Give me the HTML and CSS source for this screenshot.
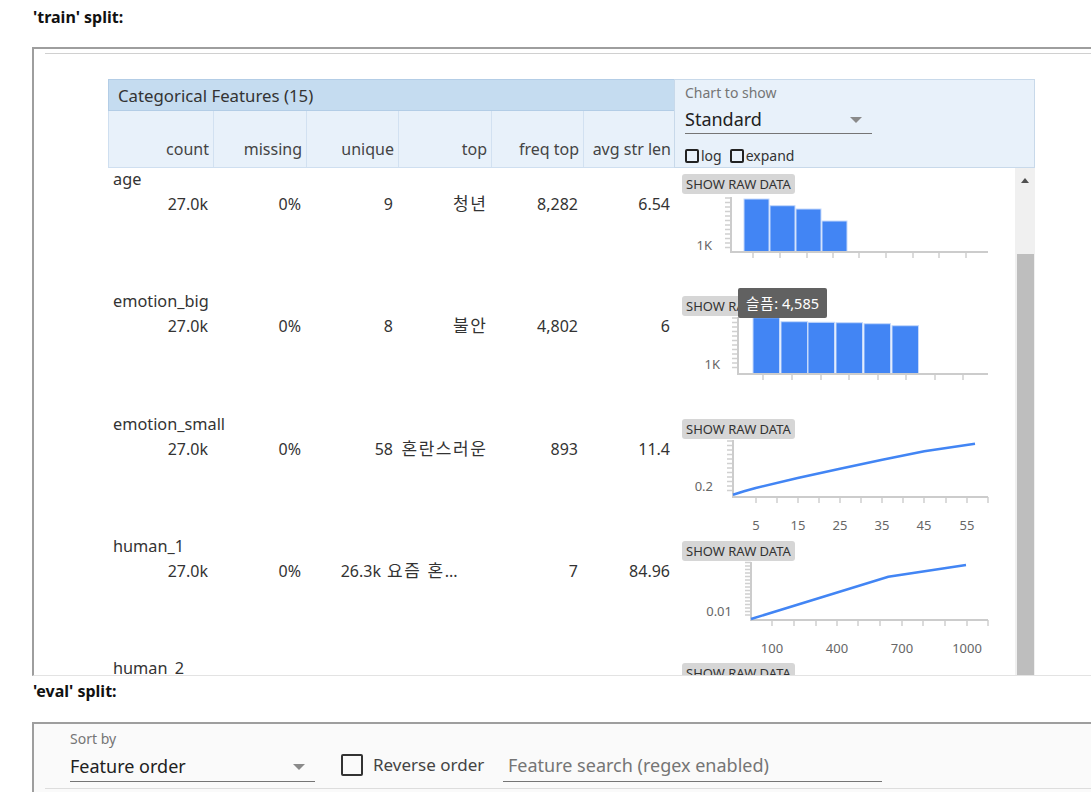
FILE: index.html
```html
<!DOCTYPE html>
<html>
<head>
<meta charset="utf-8">
<link rel="stylesheet" href="styles.css">
</head>
<body>
<div class="split-title">'train' split:</div>
<div class="frame train">
  <div class="rule"></div>
  <div class="overview">
    <div class="table-head">
      <div class="head-stats">
        <div class="head-title">Categorical Features (15)</div>
        <div class="cols head-cols">
          <div class="hc">count</div>
          <div class="hc">missing</div>
          <div class="hc">unique</div>
          <div class="hc">top</div>
          <div class="hc">freq top</div>
          <div class="hc">avg str len</div>
        </div>
      </div>
      <div class="head-chart">
        <div class="ctl-label">Chart to show</div>
        <div class="select small-select"><span>Standard</span><span class="arrow"></span></div>
        <div class="checks">
          <span class="cb-small"></span><span class="cb-text">log</span>
          <span class="cb-small"></span><span class="cb-text">expand</span>
        </div>
      </div>
    </div>
    <div class="table-body">
      <div class="rows">
        <div class="row">
          <div class="stats">
            <div class="name">age</div>
            <div class="cols vals"><div>27.0k</div><div>0%</div><div>9</div><div><span class="ko">청년</span></div><div>8,282</div><div>6.54</div></div>
          </div>
          <div class="chart">
            <div class="raw-btn">SHOW RAW DATA</div>
            <svg class="plot" width="341" height="96" viewBox="0 0 341 96">
              <path class="tick" d="M51 4H57M51 8.5H57M51 13H57M51 17.5H57M51 22H57M51 26.5H57M51 31H57M51 35.5H57M51 40H57M51 44.5H57M51 49H57M51 53.5H57"/>
              <path class="tick" d="M79 58V64M106 58V64M133 58V64M159 58V64M185 58V64M212 58V64M239 58V64M265 58V64M292 58V64"/>
              <rect class="bar" x="70" y="5" width="25" height="53"/>
              <rect class="bar" x="96" y="11.7" width="25" height="46.3"/>
              <rect class="bar" x="122" y="15" width="25" height="43"/>
              <rect class="bar" x="148" y="27" width="25" height="31"/>
              <path class="axis" d="M57 3V58H314"/>
              <text class="lbl" x="38" y="55.5" text-anchor="end">1K</text>
            </svg>
          </div>
        </div>
        <div class="row">
          <div class="stats">
            <div class="name">emotion_big</div>
            <div class="cols vals"><div>27.0k</div><div>0%</div><div>8</div><div><span class="ko">불안</span></div><div>4,802</div><div>6</div></div>
          </div>
          <div class="chart">
            <div class="raw-btn">SHOW RAW DATA</div>
            <svg class="plot" width="341" height="96" viewBox="0 0 341 96">
              <path class="tick" d="M58 2H64M58 6.5H64M58 11H64M58 15.5H64M58 20H64M58 24.5H64M58 29H64M58 33.5H64M58 38H64M58 42.5H64M58 47H64M58 51.5H64"/>
              <path class="tick" d="M89 58V64M118 58V64M147 58V64M175 58V64M204 58V64M232 58V64M261 58V64M289 58V64"/>
              <rect class="bar" x="79" y="1.7" width="26.5" height="56.3"/>
              <rect class="bar" x="107" y="5.7" width="26.5" height="52.3"/>
              <rect class="bar" x="134" y="6.3" width="26.5" height="51.7"/>
              <rect class="bar" x="162" y="6.7" width="26.5" height="51.3"/>
              <rect class="bar" x="190" y="7.7" width="26.5" height="50.3"/>
              <rect class="bar" x="218" y="9.7" width="26.5" height="48.3"/>
              <path class="axis" d="M64 1V58H314"/>
              <text class="lbl" x="46" y="53" text-anchor="end">1K</text>
            </svg>
            <div class="tooltip"><span class="ko-tip">슬픔</span>: 4,585</div>
          </div>
        </div>
        <div class="row">
          <div class="stats">
            <div class="name">emotion_small</div>
            <div class="cols vals"><div>27.0k</div><div>0%</div><div>58</div><div><span class="ko">혼란스러운</span></div><div>893</div><div>11.4</div></div>
          </div>
          <div class="chart">
            <div class="raw-btn">SHOW RAW DATA</div>
            <svg class="plot" width="341" height="96" viewBox="0 0 341 96">
              <path class="tick" d="M53 2H59M53 6.5H59M53 11H59M53 15.5H59M53 20H59M53 24.5H59M53 29H59M53 33.5H59M53 38H59M53 42.5H59M53 47H59M53 51.5H59"/>
              <path class="tick" d="M82 58V64M103 58V64M124 58V64M145 58V64M166 58V64M187 58V64M208 58V64M229 58V64M250 58V64M272 58V64M293 58V64M314 58V64"/>
              <path class="axis" d="M59 1V58H314"/>
              <path class="line" d="M59 55.7L70 52.3L81.7 49L123.7 39L166 29.7L208.3 20.7L250.3 12.3L301 4.7"/>
              <text class="lbl" x="39" y="52" text-anchor="end">0.2</text>
              <text class="lbl" x="82" y="91" text-anchor="middle">5</text>
              <text class="lbl" x="124" y="91" text-anchor="middle">15</text>
              <text class="lbl" x="166" y="91" text-anchor="middle">25</text>
              <text class="lbl" x="208" y="91" text-anchor="middle">35</text>
              <text class="lbl" x="250" y="91" text-anchor="middle">45</text>
              <text class="lbl" x="293" y="91" text-anchor="middle">55</text>
            </svg>
          </div>
        </div>
        <div class="row">
          <div class="stats">
            <div class="name">human_1</div>
            <div class="cols vals vals-wide"><div>27.0k</div><div>0%</div><div>26.3k</div><div class="clip"><span class="ko">요즘 혼</span>...</div><div>7</div><div>84.96</div></div>
          </div>
          <div class="chart">
            <div class="raw-btn">SHOW RAW DATA</div>
            <svg class="plot" width="341" height="96" viewBox="0 0 341 96">
              <path class="tick" d="M71 1.5H77M71 5H77M71 8.5H77M71 12H77M71 15.5H77M71 19H77M71 22.5H77M71 26H77M71 29.5H77M71 33H77M71 36.5H77M71 40H77M71 43.5H77M71 47H77M71 50.5H77M71 54H77"/>
              <path class="tick" d="M98 59V65M120 59V65M142 59V65M163 59V65M184 59V65M206 59V65M228 59V65M249 59V65M271 59V65M293 59V65M314 59V65"/>
              <path class="axis" d="M77 1V59H314"/>
              <path class="line" d="M77 58L214.3 15.7L292 4"/>
              <text class="lbl" x="58" y="54.5" text-anchor="end">0.01</text>
              <text class="lbl" x="98" y="92" text-anchor="middle">100</text>
              <text class="lbl" x="163" y="92" text-anchor="middle">400</text>
              <text class="lbl" x="228" y="92" text-anchor="middle">700</text>
              <text class="lbl" x="293" y="92" text-anchor="middle">1000</text>
            </svg>
          </div>
        </div>
        <div class="row">
          <div class="stats">
            <div class="name">human_2</div>
          </div>
          <div class="chart">
            <div class="raw-btn">SHOW RAW DATA</div>
          </div>
        </div>
      </div>
      <div class="scrollbar">
        <div class="sb-arrow"></div>
        <div class="sb-thumb"></div>
      </div>
    </div>
  </div>
</div>
<div class="split-title eval-title">'eval' split:</div>
<div class="frame eval">
  <div class="controls">
    <div class="sort">
      <div class="ctl-label">Sort by</div>
      <div class="select big-select"><span>Feature order</span><span class="arrow"></span></div>
    </div>
    <div class="reverse">
      <span class="cb-big"></span><span>Reverse order</span>
    </div>
    <input class="search" type="text" placeholder="Feature search (regex enabled)">
  </div>
  <div class="rule bottom-rule"></div>
</div>
</body>
</html>
```

FILE: styles.css
```css
html, body {
  margin: 0;
  padding: 0;
  background: #ffffff;
}
body {
  font-family: "Noto Sans", "Noto Sans CJK KR", sans-serif;
  color: #333333;
  width: 1091px;
  height: 792px;
  overflow: hidden;
}
.split-title {
  margin-left: 33px;
  padding-top: 6px;
  font-size: 16px;
  font-weight: bold;
  line-height: 22px;
  color: #111111;
}
.frame {
  margin-left: 32px;
  border-top: 2px solid #9e9e9e;
  border-left: 2px solid #9e9e9e;
  box-sizing: border-box;
  overflow: hidden;
}
.train {
  margin-top: 19px;
  height: 629px;
  border-bottom: 1px solid #e3e3e3;
}
.rule {
  margin-left: 11px;
  margin-top: 4px;
  border-top: 1px solid #d0d0d0;
}
.overview {
  margin-left: 74px;
  margin-top: 25px;
  width: 927px;
}
.table-head {
  display: flex;
  height: 89px;
}
.head-stats {
  width: 566px;
  display: flex;
  flex-direction: column;
}
.head-title {
  height: 32px;
  box-sizing: border-box;
  background: #c5dcf0;
  border: 1px solid #b3cde6;
  border-right: none;
  padding-left: 9px;
  padding-top: 2px;
  line-height: 28px;
  font-size: 16.8px;
  color: #333333;
}
.cols {
  display: grid;
  grid-template-columns: 104px 93px 92px 93px 92px 92px;
}
.head-cols {
  flex: 1;
  background: #e8f1fa;
  border-left: 1px solid #cfdff0;
  border-bottom: 1px solid #cfdff0;
  box-sizing: border-box;
}
.hc {
  display: flex;
  align-items: flex-end;
  justify-content: flex-end;
  padding-right: 4px;
  padding-bottom: 7px;
  font-size: 16px;
  line-height: 22px;
  color: #444444;
}
.hc + .hc {
  border-left: 1px solid #d2e1f1;
}
.head-chart {
  width: 361px;
  box-sizing: border-box;
  background: #e8f1fa;
  border: 1px solid #c8d9ea;
  padding: 4px 0 0 10px;
}
.ctl-label {
  font-size: 14px;
  line-height: 18px;
  color: #757575;
}
.select {
  position: relative;
  box-sizing: border-box;
  border-bottom: 1px solid #757575;
  color: #212121;
}
.small-select {
  width: 187px;
  margin-top: 5px;
  font-size: 18px;
  line-height: 24px;
  padding-bottom: 2px;
}
.arrow {
  position: absolute;
  right: 10px;
  top: 10px;
  width: 0;
  height: 0;
  border-left: 6px solid transparent;
  border-right: 6px solid transparent;
  border-top: 6px solid #8a8a8a;
}
.checks {
  display: flex;
  align-items: center;
  margin-top: 14px;
  font-size: 14px;
  line-height: 16px;
  color: #333333;
}
.cb-small {
  width: 10px;
  height: 10px;
  border: 2px solid #222222;
  border-radius: 2px;
}
.cb-text {
  margin-left: 2px;
  margin-right: 8px;
}
.table-body {
  display: flex;
}
.rows {
  width: 907px;
}
.row {
  display: flex;
  height: 122.33px;
}
.stats {
  width: 566px;
}
.name {
  padding-left: 5px;
  font-size: 16.3px;
  line-height: 22px;
  color: #333333;
}
.vals {
  margin-top: 3px;
  font-size: 16px;
  line-height: 22px;
  color: #333333;
}
.vals > div {
  text-align: right;
  padding-right: 4px;
  white-space: nowrap;
}
.ko {
  font-size: 17px;
  letter-spacing: 1.6px;
  margin-right: -1.6px;
}
.ko-tip {
  letter-spacing: 0.8px;
}
.vals-wide {
  grid-template-columns: 104px 93px 80px 105px 92px 92px;
}
.vals .clip {
  text-align: left;
  padding-left: 2px;
  overflow: hidden;
}
.vals .clip .ko {
  margin-right: 0;
}
.chart {
  position: relative;
  width: 341px;
}
.raw-btn {
  display: inline-block;
  margin: 6px 0 0 8px;
  height: 20px;
  box-sizing: border-box;
  padding: 0 4px;
  background: #d6d6d6;
  border-radius: 3px;
  font-size: 13px;
  line-height: 20px;
  color: #333333;
}
.plot {
  display: block;
}
.axis {
  fill: none;
  stroke: #cccccc;
  stroke-width: 2;
}
.tick {
  fill: none;
  stroke: #d0d0d0;
  stroke-width: 1.5;
}
.bar {
  fill: #4285f4;
  stroke: #c5d9fb;
  stroke-width: 1;
}
.line {
  fill: none;
  stroke: #4285f4;
  stroke-width: 2.5;
}
.lbl {
  font-family: "Noto Sans", sans-serif;
  font-size: 13px;
  fill: #666666;
}
.tooltip {
  position: absolute;
  left: 64px;
  top: -2px;
  height: 30px;
  padding: 0 8px;
  background: #616161;
  border-radius: 2px;
  color: #ffffff;
  font-size: 14.5px;
  line-height: 30px;
  white-space: nowrap;
}
.scrollbar {
  width: 20px;
  height: 520px;
  background: #f0f0f0;
  display: flex;
  flex-direction: column;
  align-items: flex-end;
}
.sb-arrow {
  align-self: center;
  margin-top: 10px;
  width: 0;
  height: 0;
  border-left: 4px solid transparent;
  border-right: 4px solid transparent;
  border-bottom: 5px solid #505050;
}
.sb-thumb {
  margin-top: 71px;
  width: 17px;
  margin-right: 1px;
  flex: 1;
  background: #bebebe;
}
.eval-title {
  padding-top: 4px;
}
.eval {
  margin-top: 20px;
  height: 100px;
  background: #fafafa;
}
.controls {
  display: flex;
  align-items: flex-end;
  padding-left: 36px;
  padding-top: 6px;
}
.sort {
  width: 245px;
}
.big-select {
  width: 245px;
  margin-top: 6px;
  font-size: 18px;
  line-height: 24px;
  padding-bottom: 3px;
}
.reverse {
  width: 162px;
  margin-left: 26px;
  margin-bottom: 5px;
  display: flex;
  align-items: center;
  font-size: 17px;
  line-height: 24px;
  color: #444444;
}
.cb-big {
  width: 18px;
  height: 18px;
  border: 2px solid #333333;
  border-radius: 2px;
  margin-right: 10px;
}
.search {
  width: 379px;
  box-sizing: border-box;
  border: none;
  border-bottom: 1px solid #757575;
  background: transparent;
  padding: 0 0 5px 5px;
  margin: 0;
  font-family: "Noto Sans", "Noto Sans CJK KR", sans-serif;
  font-size: 18px;
  line-height: 22px;
  height: 28px;
  color: #212121;
  outline: none;
}
.search::placeholder {
  color: #757575;
}
.bottom-rule {
  margin-top: 6px;
  border-top-color: #dddddd;
}
```
